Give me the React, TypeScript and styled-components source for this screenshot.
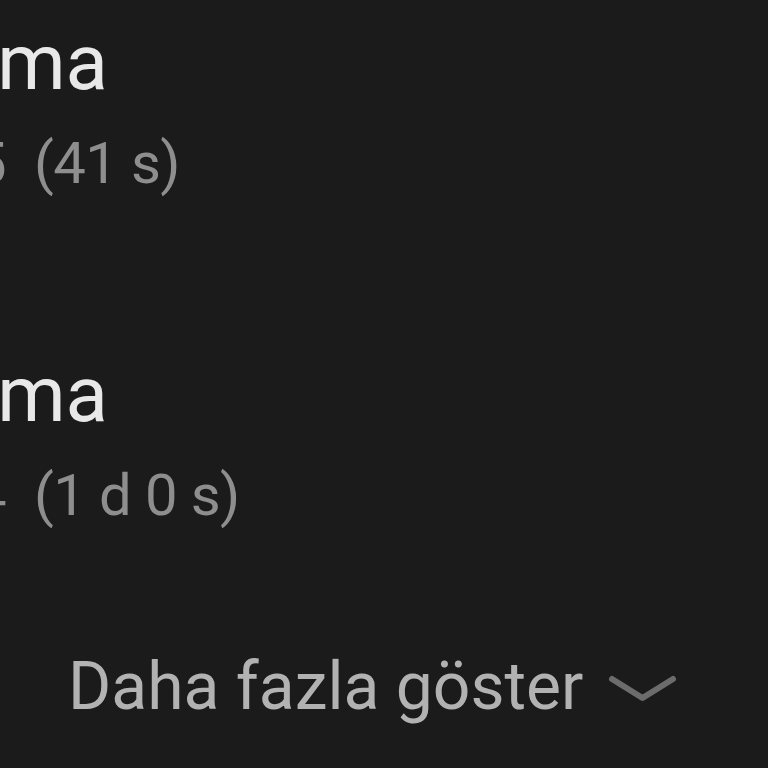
import React from "react";
import styled, { createGlobalStyle } from "styled-components";

const Global = createGlobalStyle`
  html, body {
    margin: 0;
    padding: 0;
    background: #1b1b1b;
  }
  body {
    font-family: Roboto, "Noto Sans", Arial, sans-serif;
  }
`;

const Screen = styled.div`
  width: 768px;
  height: 768px;
  overflow: hidden;
  background: #1b1b1b;
  display: flex;
  flex-direction: column;
  padding-top: 17px;
  box-sizing: border-box;
`;

const CallList = styled.div`
  display: flex;
  flex-direction: column;
  gap: 152px;
`;

const Entry = styled.div`
  display: flex;
  flex-direction: column;
  gap: 20px;
`;

/* the screenshot is cut on the left: content is anchored at its right edge */
const Edge = styled.div<{ $w: number }>`
  width: ${({ $w }) => $w}px;
  display: flex;
  justify-content: flex-end;
  flex-shrink: 0;
`;

const Title = styled.span`
  flex-shrink: 0;
  white-space: nowrap;
  font-size: 78px;
  line-height: 92px;
  color: #e8e8e8;
`;

const SubLine = styled.div`
  display: flex;
  align-items: baseline;
  gap: 28px;
  font-size: 58px;
  line-height: 68px;
  letter-spacing: -0.6px;
  color: #8e8e8e;
  white-space: nowrap;
`;

const Time = styled.span`
  flex-shrink: 0;
`;

const Duration = styled.span``;

const MoreButton = styled.div`
  margin-top: 119px;
  padding-left: 68px;
  display: flex;
  align-items: center;
  gap: 24px;
  font-size: 66px;
  line-height: 78px;
  color: #b2b2b2;
  white-space: nowrap;
`;

const Chevron = styled.svg`
  width: 72px;
  height: 32px;
  flex-shrink: 0;
  margin-top: 4px;
`;

const calls = [
  { type: "Gelen arama", time: "14:35", duration: "(41 s)" },
  { type: "Giden arama", time: "12:04", duration: "(1 d 0 s)" },
];

const App: React.FC = () => {
  return (
    <>
      <Global />
      <Screen>
        <CallList>
          {calls.map((c) => (
            <Entry key={c.time}>
              <Edge $w={108}>
                <Title>{c.type}</Title>
              </Edge>
              <SubLine>
                <Edge $w={6}>
                  <Time>{c.time}</Time>
                </Edge>
                <Duration>{c.duration}</Duration>
              </SubLine>
            </Entry>
          ))}
        </CallList>
        <MoreButton>
          Daha fazla göster
          <Chevron viewBox="0 0 72 32">
            <polyline
              points="5,6 35.5,25 66,6"
              fill="none"
              stroke="#6c6c6c"
              strokeWidth="6"
              strokeLinecap="round"
              strokeLinejoin="round"
            />
          </Chevron>
        </MoreButton>
      </Screen>
    </>
  );
};

export default App;
